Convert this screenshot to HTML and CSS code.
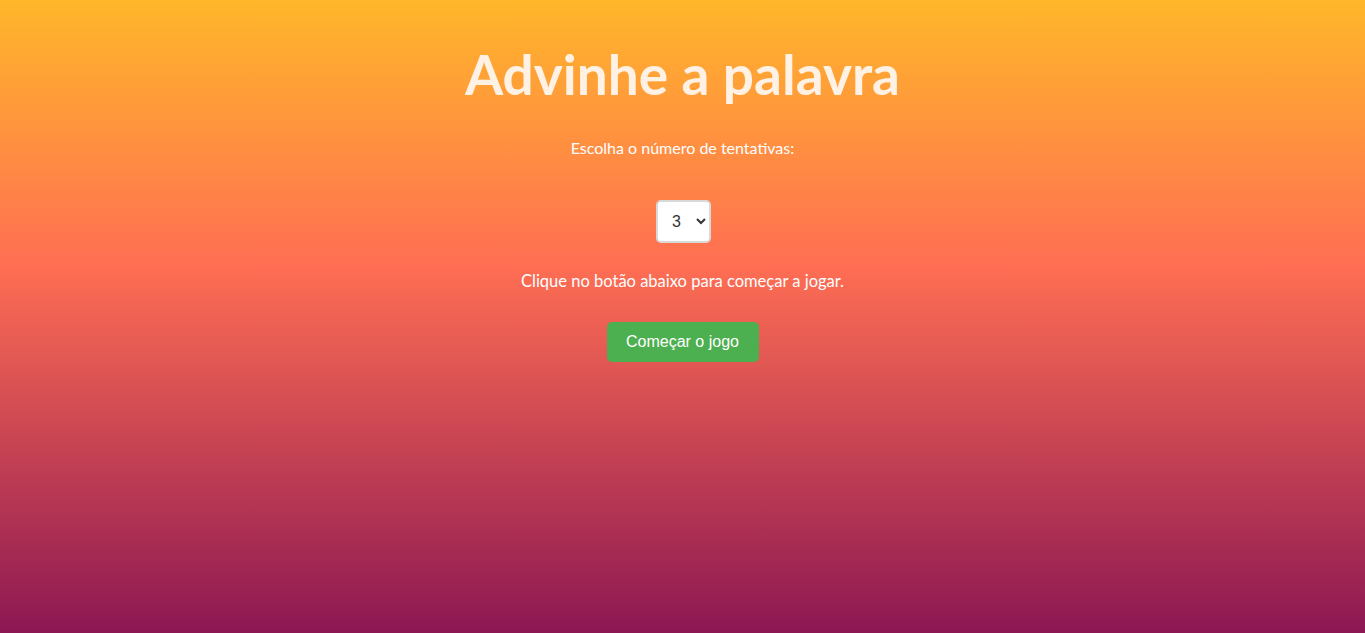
FILE: index.html
```html
<!DOCTYPE html>
<html lang="pt">
<head>
<meta charset="utf-8">
<title>Advinhe a palavra</title>
<link rel="stylesheet" href="styles.css">
</head>
<body>
<main class="game">
  <h1 class="title">Advinhe a palavra</h1>
  <p class="label">Escolha o número de tentativas:</p>
  <select class="tries">
    <option>3</option>
    <option>4</option>
    <option>5</option>
  </select>
  <p class="hint">Clique no botão abaixo para começar a jogar.</p>
  <button class="start">Começar o jogo</button>
</main>
</body>
</html>
```
FILE: styles.css
```css
html, body {
  margin: 0;
  height: 100%;
}
body {
  background: linear-gradient(180deg, #ffb72a 0%, #ff6e53 42%, #8c1753 100%);
  font-family: Lato, "Open Sans", sans-serif;
  color: #ffffff;
}
.game {
  display: flex;
  flex-direction: column;
  align-items: center;
  text-align: center;
}
.title {
  margin: 40px 0 0;
  font-size: 55px;
  font-weight: 700;
  line-height: 68px;
  color: #fff1e4;
}
.label {
  margin: 30px 0 0;
  font-size: 16px;
  line-height: 20px;
}
.tries {
  box-sizing: border-box;
  margin: 42px 0 0 2px;
  width: 55px;
  height: 43px;
  padding: 0 6px 0 10px;
  border: 2px solid #d9d9d9;
  border-radius: 5px;
  background: #ffffff;
  font-family: "Liberation Sans", Arial, sans-serif;
  font-size: 16px;
  color: #333333;
}
.hint {
  margin: 28px 0 0;
  font-size: 16.5px;
  line-height: 20px;
}
.start {
  margin-top: 31px;
  width: 152px;
  height: 40px;
  border: none;
  border-radius: 5px;
  background: #4caf50;
  color: #ffffff;
  font-family: "Liberation Sans", Arial, sans-serif;
  font-size: 16px;
  cursor: pointer;
}
```
